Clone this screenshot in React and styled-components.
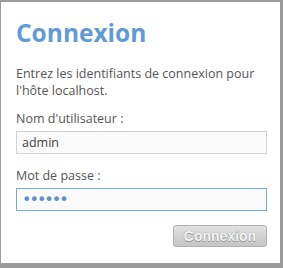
import React from "react";
import styled, { createGlobalStyle } from "styled-components";

const GlobalStyle = createGlobalStyle`
  html, body {
    margin: 0;
    padding: 0;
    background: #9b9b9b;
  }
  body {
    font-family: "Open Sans", "Noto Sans", sans-serif;
  }
`;

const Frame = styled.div`
  width: 283px;
  height: 268px;
  box-sizing: border-box;
  padding: 2px 3px 5px 1px;
`;

const Panel = styled.form`
  background: #fff;
  height: 100%;
  box-sizing: border-box;
  padding: 15px 15px 0 15px;
  display: flex;
  flex-direction: column;
`;

const Title = styled.h1`
  margin: 0;
  font-size: 24.5px;
  font-weight: 700;
  color: #5f9bd6;
  line-height: 32px;
`;

const Intro = styled.p`
  margin: 16px 0 0;
  font-size: 12.5px;
  line-height: 17px;
  color: #555;
`;

const Label = styled.label`
  display: block;
  margin-top: ${(p) => p.$top}px;
  font-size: 12.5px;
  line-height: 17px;
  color: #555;
`;

const Field = styled.input`
  display: block;
  margin-top: 4px;
  width: 251px;
  height: 23px;
  box-sizing: border-box;
  padding: 0 5px;
  border: 1px solid ${(p) => (p.$focus ? "#7aaadc" : "#d2d2d2")};
  background: #fafafa;
  font-family: ${(p) => (p.$focus ? '"DejaVu Sans", sans-serif' : "inherit")};
  font-size: ${(p) => (p.$focus ? "16px" : "12.5px")};
  color: ${(p) => (p.$focus ? "#5b8fcf" : "#444")};
  outline: none;
  letter-spacing: ${(p) => (p.$focus ? "-2px" : "0")};
`;

const Actions = styled.div`
  display: flex;
  justify-content: flex-end;
  margin-top: 14px;
  width: 251px;
`;

const Button = styled.button`
  width: 94px;
  height: 22px;
  box-sizing: border-box;
  border: 1px solid #b0b0b0;
  border-radius: 3px;
  background: linear-gradient(#e2e2e2, #c4c4c4);
  font-family: "Liberation Sans", Arial, sans-serif;
  font-size: 14px;
  font-weight: 700;
  color: #f4f4f4;
  text-shadow: 0 0 1px #888, 0 1px 0 #999;
  padding: 0;
`;

export default function App() {
  return (
    <>
      <GlobalStyle />
      <Frame>
        <Panel onSubmit={(e) => e.preventDefault()}>
          <Title>Connexion</Title>
          <Intro>
            Entrez les identifiants de connexion pour l'hôte localhost.
          </Intro>
          <Label $top={11}>Nom d'utilisateur :</Label>
          <Field defaultValue="admin" />
          <Label $top={13}>Mot de passe :</Label>
          <Field $focus type="password" defaultValue="secret" />
          <Actions>
            <Button type="button" disabled>
              Connexion
            </Button>
          </Actions>
        </Panel>
      </Frame>
    </>
  );
}
